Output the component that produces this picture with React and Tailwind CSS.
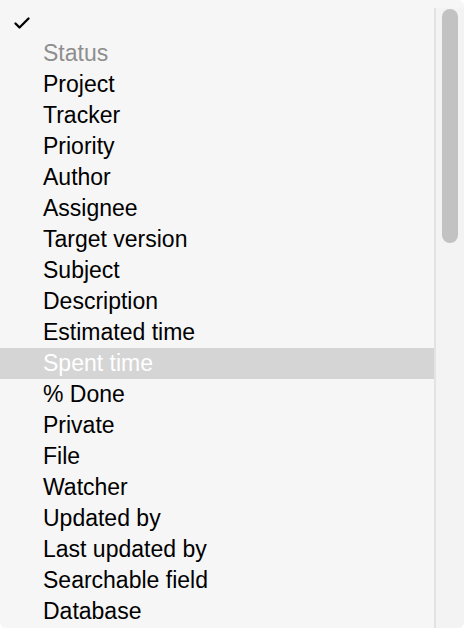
import React from 'react';

const items = [
    { label: 'Status', muted: true },
    { label: 'Project' },
    { label: 'Tracker' },
    { label: 'Priority' },
    { label: 'Author' },
    { label: 'Assignee' },
    { label: 'Target version' },
    { label: 'Subject' },
    { label: 'Description' },
    { label: 'Estimated time' },
    { label: 'Spent time', active: true },
    { label: '% Done' },
    { label: 'Private' },
    { label: 'File' },
    { label: 'Watcher' },
    { label: 'Updated by' },
    { label: 'Last updated by' },
    { label: 'Searchable field' },
    { label: 'Database' },
];

const App = () => {
    return (
        <div className="w-[464px] h-[636px] bg-white overflow-hidden" style={{ fontFamily: '"Liberation Sans", Arial, sans-serif' }}>
            <div className="h-[628px] flex bg-[#f6f6f6] rounded-b-[6px] rounded-tr-[6px] overflow-hidden">
                <div className="w-[434px] pt-[7px]">
                    <div className="h-[31px] flex items-center pl-[14px] pt-[1px]">
                        <svg width="16" height="13" viewBox="0 0 16 13" fill="none">
                            <path d="M1.5 6.5 L5.5 10.5 L14.5 1.5" stroke="#000" strokeWidth="2.3" strokeLinecap="round" strokeLinejoin="round" />
                        </svg>
                    </div>
                    {items.map(item => (
                        <div
                            key={item.label}
                            className={`h-[31px] flex items-center pl-[43px] text-[23px] leading-none ${item.active
                                    ? 'bg-[#d5d5d5] text-white'
                                    : item.muted
                                        ? 'text-[#8e8e8e]'
                                        : 'text-black'
                                }`}
                        >
                            {item.label}
                        </div>
                    ))}
                </div>
                <div className="flex-1 mt-[8px] border-l-2 border-[#e3e3e3] bg-[#f3f3f3] pt-[1px] pl-[6px]">
                    <div className="w-[16px] h-[234px] rounded-full bg-[#c2c2c2]" />
                </div>
            </div>
        </div>
    );
};

export default App;
